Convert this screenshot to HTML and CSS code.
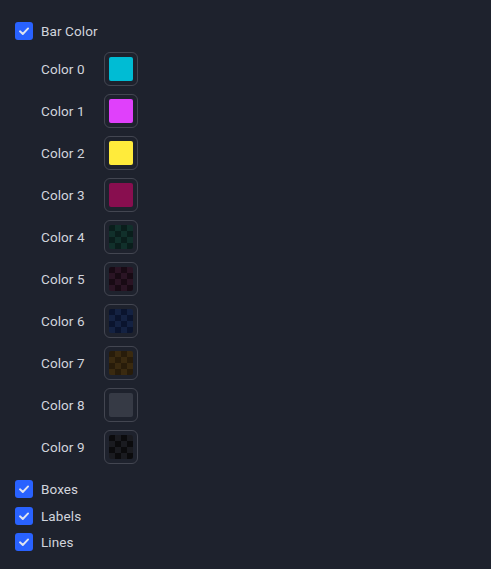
FILE: index.html
```html
<!DOCTYPE html>
<html>
<head>
<meta charset="utf-8">
<link rel="stylesheet" href="styles.css">
</head>
<body>
<div class="panel">
  <label class="check-row">
    <span class="box"><svg viewBox="0 0 18 18" width="18" height="18"><path d="M5 9.3l2.8 2.7 5.3-5.6" fill="none" stroke="#dfe4f0" stroke-width="1.9" stroke-linecap="round" stroke-linejoin="round"/></svg></span>
    <span class="text">Bar Color</span>
  </label>
  <div class="colors">
    <div class="color-row"><span class="text">Color 0</span><span class="swatch"><span class="fill c0"></span></span></div>
    <div class="color-row"><span class="text">Color 1</span><span class="swatch"><span class="fill c1"></span></span></div>
    <div class="color-row"><span class="text">Color 2</span><span class="swatch"><span class="fill c2"></span></span></div>
    <div class="color-row"><span class="text">Color 3</span><span class="swatch"><span class="fill c3"></span></span></div>
    <div class="color-row"><span class="text">Color 4</span><span class="swatch"><span class="fill c4"></span></span></div>
    <div class="color-row"><span class="text">Color 5</span><span class="swatch"><span class="fill c5"></span></span></div>
    <div class="color-row"><span class="text">Color 6</span><span class="swatch"><span class="fill c6"></span></span></div>
    <div class="color-row"><span class="text">Color 7</span><span class="swatch"><span class="fill c7"></span></span></div>
    <div class="color-row"><span class="text">Color 8</span><span class="swatch"><span class="fill c8"></span></span></div>
    <div class="color-row"><span class="text">Color 9</span><span class="swatch"><span class="fill c9"></span></span></div>
  </div>
  <div class="checks">
    <label class="check-row">
      <span class="box"><svg viewBox="0 0 18 18" width="18" height="18"><path d="M5 9.3l2.8 2.7 5.3-5.6" fill="none" stroke="#dfe4f0" stroke-width="1.9" stroke-linecap="round" stroke-linejoin="round"/></svg></span>
      <span class="text">Boxes</span>
    </label>
    <label class="check-row">
      <span class="box"><svg viewBox="0 0 18 18" width="18" height="18"><path d="M5 9.3l2.8 2.7 5.3-5.6" fill="none" stroke="#dfe4f0" stroke-width="1.9" stroke-linecap="round" stroke-linejoin="round"/></svg></span>
      <span class="text">Labels</span>
    </label>
    <label class="check-row">
      <span class="box"><svg viewBox="0 0 18 18" width="18" height="18"><path d="M5 9.3l2.8 2.7 5.3-5.6" fill="none" stroke="#dfe4f0" stroke-width="1.9" stroke-linecap="round" stroke-linejoin="round"/></svg></span>
      <span class="text">Lines</span>
    </label>
  </div>
</div>
</body>
</html>
```

FILE: styles.css
```css
html, body {
  margin: 0;
  padding: 0;
  background: #1e222d;
  width: 491px;
  height: 569px;
  overflow: hidden;
}
.panel {
  padding: 22px 15px 0 15px;
  display: flex;
  flex-direction: column;
  font-family: Roboto, "Liberation Sans", sans-serif;
  font-size: 13.5px;
  font-weight: 400;
  letter-spacing: 0.1px;
  color: #d1d4dc;
}
.check-row {
  display: flex;
  align-items: center;
  height: 18px;
  gap: 8px;
}
.box {
  width: 18px;
  height: 18px;
  border-radius: 3px;
  background: #2962ff;
  display: block;
}
.box svg { display: block; }
.text {
  line-height: 18px;
}
.colors {
  display: flex;
  flex-direction: column;
  gap: 8px;
  margin-top: 12px;
  padding-left: 26px;
}
.color-row {
  display: flex;
  align-items: center;
  height: 34px;
}
.color-row .text {
  width: 63px;
}
.swatch {
  width: 32px;
  height: 32px;
  border: 1px solid #434651;
  border-radius: 6px;
  display: flex;
  align-items: center;
  justify-content: center;
}
.fill {
  width: 24px;
  height: 24px;
  border-radius: 2px;
  display: block;
}
.c0 { background: #00bcd4; }
.c1 { background: #e040fb; }
.c2 { background: #ffeb3b; }
.c3 { background: #880e4f; }
.c4 { background: repeating-conic-gradient(#11302b 0 25%, #0a1e1c 0 50%) 0 0 / 12px 12px; }
.c5 { background: repeating-conic-gradient(#2a1424 0 25%, #180a14 0 50%) 0 0 / 12px 12px; }
.c6 { background: repeating-conic-gradient(#142242 0 25%, #0a142e 0 50%) 0 0 / 12px 12px; }
.c7 { background: repeating-conic-gradient(#3a2a10 0 25%, #281c0a 0 50%) 0 0 / 12px 12px; }
.c8 { background: #363a45; }
.c9 { background: repeating-conic-gradient(#1a1b20 0 25%, #0b0b0d 0 50%) 0 0 / 12px 12px; }
.checks {
  display: flex;
  flex-direction: column;
  gap: 8.5px;
  margin-top: 16px;
}
```
